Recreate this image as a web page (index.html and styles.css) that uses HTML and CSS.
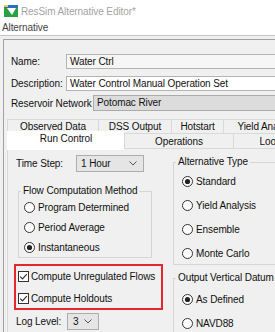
FILE: index.html
```html
<!DOCTYPE html>
<html>
<head>
<meta charset="utf-8">
<link rel="stylesheet" href="styles.css">
</head>
<body>
<div class="titlebar">
  <svg class="appicon" width="14" height="12" viewBox="0 0 14 12">
    <rect x="0" y="0" width="14" height="12" fill="#27a244"/>
    <rect x="0" y="0" width="14" height="3" fill="#2a6fc4"/>
    <rect x="0" y="0" width="4" height="2" fill="#f2d23a"/>
    <polygon points="3,3 12,3 8,10" fill="#ffffff"/>
  </svg>
  <span class="title">ResSim Alternative Editor*</span>
</div>
<div class="menubar">Alternative</div>
<div class="sep"></div>
<div class="panel">
  <div class="form">
    <div class="row r-name"><span class="lbl lbl-short">Name:</span><div class="field f-name">Water Ctrl</div></div>
    <div class="row r-desc"><span class="lbl lbl-short">Description:</span><div class="field f-desc">Water Control Manual Operation Set</div></div>
    <div class="row r-net"><span class="lbl lbl-long">Reservoir Network</span><div class="field f-net">Potomac River</div></div>
  </div>
  <div class="tabs">
    <div class="tabrow back">
      <div class="tab t-obs">Observed Data</div>
      <div class="tab t-dss">DSS Output</div>
      <div class="tab t-hot">Hotstart</div>
      <div class="tab t-yield">Yield Analysis</div>
    </div>
    <div class="tabrow front">
      <div class="tab t-run selected">Run Control</div>
      <div class="tab t-ops">Operations</div>
      <div class="tab t-look">Lookback</div>
    </div>
  </div>
  <div class="pane">
    <div class="col left">
      <div class="timerow">
        <span class="lbl-time">Time Step:</span>
        <div class="combo c-time"><span>1 Hour</span><svg width="8" height="5" viewBox="0 0 8 5"><path d="M0.5 0.5 L4 4 L7.5 0.5" fill="none" stroke="#555" stroke-width="1"/></svg></div>
      </div>
      <fieldset class="group g-flow">
        <legend>Flow Computation Method</legend>
        <div class="opt"><svg class="radio" width="11" height="11" viewBox="0 0 11 11"><circle cx="5.5" cy="5.5" r="5" fill="#fff" stroke="#333"/></svg><span>Program Determined</span></div>
        <div class="opt"><svg class="radio" width="11" height="11" viewBox="0 0 11 11"><circle cx="5.5" cy="5.5" r="5" fill="#fff" stroke="#333"/></svg><span>Period Average</span></div>
        <div class="opt"><svg class="radio" width="11" height="11" viewBox="0 0 11 11"><circle cx="5.5" cy="5.5" r="5" fill="#fff" stroke="#333"/><circle cx="5.5" cy="5.5" r="2.6" fill="#222"/></svg><span>Instantaneous</span></div>
      </fieldset>
      <div class="highlight">
        <div class="chk"><svg class="box" width="11" height="11" viewBox="0 0 11 11"><rect x="0.5" y="0.5" width="10" height="10" fill="#fff" stroke="#333"/><path d="M2.2 5.6 L4.5 7.9 L8.8 3.2" fill="none" stroke="#333" stroke-width="1.2"/></svg><span>Compute Unregulated Flows</span></div>
        <div class="chk"><svg class="box" width="11" height="11" viewBox="0 0 11 11"><rect x="0.5" y="0.5" width="10" height="10" fill="#fff" stroke="#333"/><path d="M2.2 5.6 L4.5 7.9 L8.8 3.2" fill="none" stroke="#333" stroke-width="1.2"/></svg><span>Compute Holdouts</span></div>
      </div>
      <div class="logrow">
        <span class="lbl-log">Log Level:</span>
        <div class="combo c-log"><span>3</span><svg width="8" height="5" viewBox="0 0 8 5"><path d="M0.5 0.5 L4 4 L7.5 0.5" fill="none" stroke="#555" stroke-width="1"/></svg></div>
      </div>
    </div>
    <div class="col right">
      <fieldset class="group g-alt">
        <legend>Alternative Type</legend>
        <div class="opt"><svg class="radio" width="11" height="11" viewBox="0 0 11 11"><circle cx="5.5" cy="5.5" r="5" fill="#fff" stroke="#333"/><circle cx="5.5" cy="5.5" r="2.6" fill="#222"/></svg><span>Standard</span></div>
        <div class="opt"><svg class="radio" width="11" height="11" viewBox="0 0 11 11"><circle cx="5.5" cy="5.5" r="5" fill="#fff" stroke="#333"/></svg><span>Yield Analysis</span></div>
        <div class="opt"><svg class="radio" width="11" height="11" viewBox="0 0 11 11"><circle cx="5.5" cy="5.5" r="5" fill="#fff" stroke="#333"/></svg><span>Ensemble</span></div>
        <div class="opt"><svg class="radio" width="11" height="11" viewBox="0 0 11 11"><circle cx="5.5" cy="5.5" r="5" fill="#fff" stroke="#333"/></svg><span>Monte Carlo</span></div>
      </fieldset>
      <fieldset class="group g-datum">
        <legend>Output Vertical Datum</legend>
        <div class="opt"><svg class="radio" width="11" height="11" viewBox="0 0 11 11"><circle cx="5.5" cy="5.5" r="5" fill="#fff" stroke="#333"/><circle cx="5.5" cy="5.5" r="2.6" fill="#222"/></svg><span>As Defined</span></div>
        <div class="opt"><svg class="radio" width="11" height="11" viewBox="0 0 11 11"><circle cx="5.5" cy="5.5" r="5" fill="#fff" stroke="#333"/></svg><span>NAVD88</span></div>
      </fieldset>
    </div>
  </div>
</div>
</body>
</html>
```
FILE: styles.css
```css
* { box-sizing: border-box; }
html, body { margin: 0; padding: 0; }
body {
  width: 275px;
  height: 332px;
  overflow: hidden;
  background: #f0f0f0;
  font-family: "Liberation Sans", Arial, sans-serif;
  font-size: 10px;
  letter-spacing: -0.1px;
  color: #111;
  white-space: nowrap;
}
.titlebar {
  height: 22px;
  background: #fff;
  display: flex;
  align-items: center;
  padding-left: 4px;
  gap: 3px;
}
.title { color: #a3a3a3; font-size: 10px; }
.menubar {
  height: 13px;
  background: #fff;
  padding-left: 2px;
  line-height: 12px;
  color: #444;
}
.sep {
  height: 4px;
  border-top: 1px solid #c6c6c6;
}
.panel {
  margin-left: 3px;
  width: 320px;
  border-left: 1px solid #a0a0a0;
  border-top: 1px solid #a0a0a0;
}
.form { padding: 14px 0 0 7px; }
.row { display: flex; align-items: center; }
.r-desc { margin-top: 7px; }
.r-net { margin-top: 4px; }
.lbl-short { width: 55px; flex: none; }
.lbl-long { width: 82px; flex: none; }
.field {
  flex: 1;
  height: 15px;
  line-height: 13px;
  padding-left: 3px;
  border: 1px solid #b4b4b4;
}
.f-name { background: #f6f6f6; }
.f-desc { background: #fff; }
.f-net { background: #dcdcdc; height: 16px; line-height: 14px; border-color: #ababab; }

.tabs { margin: 8px 0 0 3px; }
.tabrow { display: flex; }
.back { height: 14px; }
.front { height: 15px; }
.tab {
  flex: none;
  text-align: center;
  border-top: 1px solid #d9d9d9;
  border-left: 1px solid #d9d9d9;
  line-height: 13px;
  background: #f0f0f0;
}
.t-obs { width: 91px; }
.t-dss { width: 73px; }
.t-hot { width: 52px; }
.t-yield { width: 88px; }
.t-run { width: 117px; }
.t-ops { width: 109px; }
.t-look { width: 94px; }
.front .tab { line-height: 15px; }
.tab.selected {
  position: relative;
  z-index: 1;
  background: #fff;
  margin-top: -2px;
  height: 19px;
  line-height: 14px;
  border-color: #fff;
}
.pane {
  display: flex;
  border-top: 1px solid #d9d9d9;
  border-left: 1px solid #d9d9d9;
  margin-left: 3px;
  padding-left: 6px;
}
.col { display: flex; flex-direction: column; flex: none; }
.left { width: 149px; }
.right { width: 140px; margin-left: 10px; }

.timerow { display: flex; align-items: center; margin-top: 6px; height: 17px; }
.lbl-time { width: 60px; margin-left: 2px; }
.combo {
  display: flex;
  align-items: center;
  justify-content: space-between;
  height: 17px;
  background: #e5e5e5;
  border: 1px solid #adadad;
  padding: 0 6px 0 4px;
}
.c-time { width: 68px; }
.c-log { width: 32px; padding-left: 5px; }

.group {
  margin: 0;
  border: 1px solid #d5d5d5;
  padding: 0 0 0 2px;
  min-width: 0;
}
.group legend {
  padding: 0 2px;
  line-height: 12px;
  height: 12px;
}
.g-flow { margin: 13px 0 0 4px; width: 134px; }
.g-flow .opt { height: 20px; }
.g-flow .radio { margin-left: 3px; }
.opt { display: flex; align-items: center; gap: 3px; }
.g-alt { margin-top: 7px; padding-top: 2px; width: 140px; }
.g-alt .opt, .g-datum .opt { height: 22px; margin-bottom: 2px; }
.g-alt .opt:last-child { margin-bottom: 0; }
.g-alt .radio, .g-datum .radio { margin-left: 6px; }
.g-datum { margin-top: 7px; padding-top: 4px; width: 140px; }

.highlight {
  margin-top: 6px;
  height: 46px;
  border: 2px solid #e2272d;
  display: flex;
  flex-direction: column;
  gap: 2px;
}
.chk { height: 20px; display: flex; align-items: center; gap: 2px; }
.chk .box { margin-left: 2px; }
.logrow { display: flex; align-items: center; margin-top: 3px; height: 17px; }
.lbl-log { width: 51px; margin-left: 2px; }
svg { flex: none; display: block; }
```
